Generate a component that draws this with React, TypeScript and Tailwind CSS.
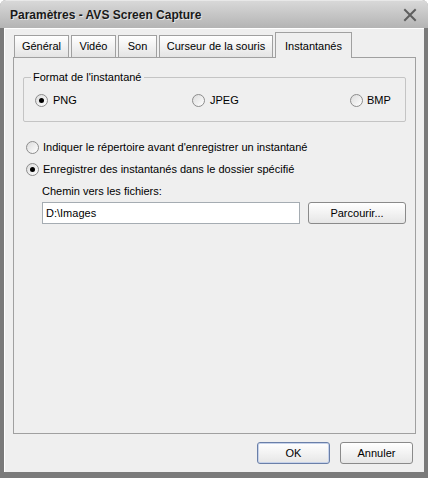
import React from "react";

const font = { fontFamily: '"Liberation Sans", Arial, sans-serif' };

const Radio = ({ checked }: { checked?: boolean }) => (
  <span className="w-[13px] h-[13px] rounded-full border border-[#8c8c8c] bg-gradient-to-br from-[#dcdcdc] to-white flex items-center justify-center shrink-0">
    {checked && <span className="w-[5px] h-[5px] rounded-full bg-black"></span>}
  </span>
);

const Tab = ({ label, w, active }: { label: string; w: number; active?: boolean }) => {
  if (active) {
    return (
      <div
        className="h-[26px] -mb-px border border-b-0 border-[#a0a0a0] bg-[#efefef] flex items-start justify-center pt-[5px] relative z-10"
        style={{ width: w }}
      >
        {label}
      </div>
    );
  }
  return (
    <div
      className="h-[22px] border border-b-0 border-[#a0a0a0] bg-gradient-to-b from-white to-[#e4e4e4] flex items-center justify-center"
      style={{ width: w }}
    >
      {label}
    </div>
  );
};

const Button = ({ label, def, w }: { label: string; def?: boolean; w: number }) => (
  <div
    className={
      "h-[22px] rounded-[3px] border flex items-center justify-center bg-gradient-to-b from-white to-[#e6e6e6] " +
      (def ? "border-[#6a7fa8] shadow-[inset_0_0_0_1px_#c6d2ea]" : "border-[#8a8a8a]")
    }
    style={{ width: w }}
  >
    {label}
  </div>
);

export default function App() {
  return (
    <div
      className="w-[428px] h-[478px] bg-[#7a7a7a] rounded-t-[6px] flex flex-col px-[4px] pb-[6px] text-[11px] text-black"
      style={font}
    >
      {/* title bar */}
      <div className="h-[28px] -mx-[4px] px-[10px] rounded-t-[6px] bg-gradient-to-b from-[#d8d8d8] to-[#b4b4b4] border-t border-[#e8e8e8] flex items-center justify-between">
        <span className="font-bold text-[12px] text-[#1a1a1a] [text-shadow:1px_1px_0_#e6e6e6]">
          Paramètres - AVS Screen Capture
        </span>
        <svg width="14" height="14" viewBox="0 0 14 14" className="mr-[1px]">
          <path d="M2 2 L12 12 M12 2 L2 12" stroke="#5e5e5e" strokeWidth="2" strokeLinecap="square" />
        </svg>
      </div>

      {/* client */}
      <div className="flex-1 bg-[#efefef] border-l border-t border-white flex flex-col px-[8px]">
        <div className="flex items-end h-[28px] pl-[1px] gap-[2px]">
          <Tab label="Général" w={55} />
          <Tab label="Vidéo" w={45} />
          <Tab label="Son" w={39} />
          <Tab label="Curseur de la souris" w={114} />
          <Tab label="Instantanés" w={77} active />
        </div>

        <div className="h-[377px] border border-[#a0a0a0] bg-[#efefef] px-[9px] pt-[13px]">
          <div className="relative h-[45px] border border-[#c4c4c4] rounded-[2px] mt-[6px]">
            <span className="absolute -top-[8px] left-[7px] bg-[#efefef] px-[2px] leading-[14px]">
              Format de l'instantané
            </span>
            <div className="flex items-center h-full pt-[2px] pl-[11px]">
              <div className="flex items-center gap-[5px] w-[157px]">
                <Radio checked />
                <span>PNG</span>
              </div>
              <div className="flex items-center gap-[5px] w-[158px]">
                <Radio />
                <span>JPEG</span>
              </div>
              <div className="flex items-center gap-[4px]">
                <Radio />
                <span>BMP</span>
              </div>
            </div>
          </div>

          <div className="flex flex-col pl-[3px] mt-[19px]">
            <div className="flex items-center gap-[4px] h-[13px]">
              <Radio />
              <span>Indiquer le répertoire avant d'enregistrer un instantané</span>
            </div>
            <div className="flex items-center gap-[4px] h-[13px] mt-[9px]">
              <Radio checked />
              <span>Enregistrer des instantanés dans le dossier spécifié</span>
            </div>
            <div className="pl-[16px] mt-[8px] leading-[14px]">Chemin vers les fichiers:</div>
            <div className="flex items-center pl-[16px] mt-[4px] gap-[8px]">
              <div className="w-[258px] h-[22px] border border-[#a5acb2] bg-white flex items-center pl-[3px]">
                D:\Images
              </div>
              <Button label="Parcourir..." w={98} />
            </div>
          </div>
        </div>

        <div className="flex justify-end gap-[10px] mt-[8px] pr-[3px]">
          <Button label="OK" def w={73} />
          <Button label="Annuler" w={73} />
        </div>
      </div>
    </div>
  );
}
